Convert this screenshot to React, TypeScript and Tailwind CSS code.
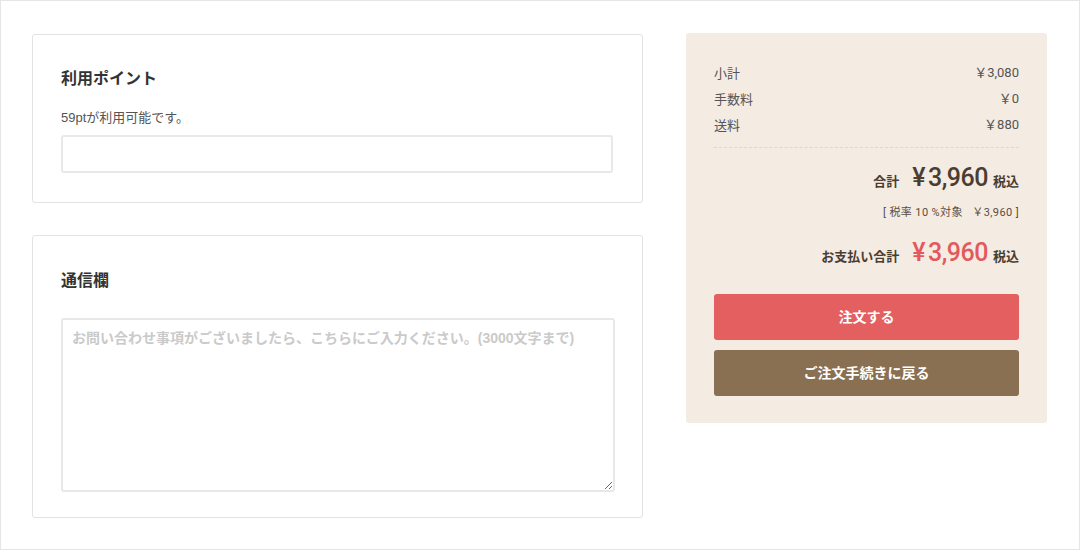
import React from 'react';

const jp = { fontFamily: '"Liberation Sans", "Noto Sans CJK JP", sans-serif' };
const num = { fontFamily: 'Roboto, "Noto Sans CJK JP", sans-serif' };

const Row = ({ label, value }: { label: string; value: string }) => (
  <div className="flex justify-between items-center h-[26px] text-[13px] text-[#555]">
    <span>{label}</span>
    <span style={num}>{value}</span>
  </div>
);

const Price = ({ label, color }: { label: string; color: string }) => (
  <div className="flex justify-end items-baseline text-[#4a3d31]">
    <span className="text-[13px] font-bold">{label}</span>
    <span className={`ml-[13px] text-[25px] font-medium leading-[34px] tracking-[-0.5px] ${color}`} style={num}>
      <span className="mr-[3px]">¥</span>3,960
    </span>
    <span className="ml-[5px] text-[13px] font-bold">税込</span>
  </div>
);

const App: React.FC = () => {
  return (
    <div className="w-[1080px] h-[550px] border border-[#e6e6e6] bg-white" style={jp}>
      <div className="flex gap-[43px] pl-[31px] pt-[32px]">
        {/* left column */}
        <div className="w-[611px] mt-[1px] flex flex-col gap-[32px]">
          <div className="border border-[#e3e3e3] rounded-[3px] px-[28px] pt-[33px] pb-[29px]">
            <h2 className="text-[16px] font-bold text-[#333] leading-[22px]">利用ポイント</h2>
            <p className="mt-[19px] text-[13px] text-[#555] leading-[18px]">59ptが利用可能です。</p>
            <input
              type="text"
              className="mt-[8px] w-[552px] h-[38px] border-2 border-[#e8e8e8] rounded-[3px] outline-none"
            />
          </div>

          <div className="border border-[#e3e3e3] rounded-[3px] px-[28px] pt-[34px] pb-[25px]">
            <h2 className="text-[16px] font-bold text-[#333] leading-[22px]">通信欄</h2>
            <textarea
              placeholder="お問い合わせ事項がございましたら、こちらにご入力ください。(3000文字まで)"
              className="mt-[26px] block w-[554px] h-[174px] border-2 border-[#e8e8e8] rounded-[3px] px-[9px] py-[8px] text-[14px] font-bold text-[#333] placeholder:text-[#cacaca] outline-none resize"
              style={jp}
            />
          </div>
        </div>

        {/* right column */}
        <div className="w-[361px] h-[390px] bg-[#f4ebe2] rounded-[3px] px-[28px] pt-[27px]" style={{ fontFamily: '"Noto Sans CJK JP", "Noto Sans", sans-serif' }}>
          <Row label="小計" value="￥3,080" />
          <Row label="手数料" value="￥0" />
          <Row label="送料" value="￥880" />
          <div className="mt-[9px] border-t border-dashed border-[#e0d6cc]" />

          <div className="mt-[13px]">
            <Price label="合計" color="" />
          </div>
          <div className="mt-[10px] text-right text-[11px] text-[#5a4d40] whitespace-pre tracking-[0.4px]" style={num}>[ 税率 10 %対象   ￥3,960 ]</div>

          <div className="mt-[14px]">
            <Price label="お支払い合計" color="text-[#e25a5c]" />
          </div>

          <button className="mt-[24px] w-full h-[46px] bg-[#e35f60] rounded-[3px] text-white text-[14px] font-bold">
            注文する
          </button>
          <button className="mt-[10px] w-full h-[46px] bg-[#8a7052] rounded-[3px] text-white text-[14px] font-bold">
            ご注文手続きに戻る
          </button>
        </div>
      </div>
    </div>
  );
};

export default App;
